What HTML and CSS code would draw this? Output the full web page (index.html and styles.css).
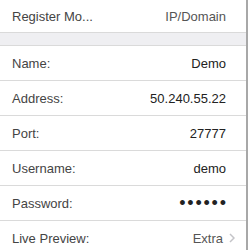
FILE: index.html
```html
<!DOCTYPE html>
<html lang="en">
<head>
    <meta charset="UTF-8">
    <meta name="viewport" content="width=device-width, initial-scale=1.0">
    <title>Device Settings</title>

    <link rel="stylesheet" href="styles.css">
</head>
<body>

    <div class="screen">
        <div class="row">
            <span class="label">Register Mo...</span>
            <span class="value muted">IP/Domain</span>
        </div>

        <div class="gap"></div>

        <div class="row">
            <span class="label">Name:</span>
            <span class="value">Demo</span>
        </div>
        <div class="row">
            <span class="label">Address:</span>
            <span class="value">50.240.55.22</span>
        </div>
        <div class="row">
            <span class="label">Port:</span>
            <span class="value">27777</span>
        </div>
        <div class="row">
            <span class="label">Username:</span>
            <span class="value">demo</span>
        </div>
        <div class="row">
            <span class="label">Password:</span>
            <span class="value dots">&bull;&bull;&bull;&bull;&bull;&bull;</span>
        </div>
        <div class="row link">
            <span class="label">Live Preview:</span>
            <span class="value muted">Extra</span>
            <svg class="chevron" width="6" height="10" viewBox="0 0 6 10">
                <path d="M1 1 L5 5 L1 9" fill="none" stroke="#c4c4c8" stroke-width="1.5"/>
            </svg>
        </div>
    </div>

</body>
</html>
```

FILE: styles.css
```css
* {
    padding: 0;
    margin: 0;
    box-sizing: border-box;
}

body {
    background-color: white;
    font-family: "Liberation Sans", Arial, sans-serif;
    font-size: 13px;
    width: 250px;
    height: 250px;
    overflow: hidden;
}

.screen {
    width: 248px;
    height: 250px;
    border-right: 2px solid #a8a8a8;
}

.row {
    display: flex;
    align-items: center;
    height: 35px;
    padding: 0 20px 0 12px;
    border-bottom: 1px solid #dadada;
    background-color: white;
}

.row:first-child {
    height: 33px;
}

.gap {
    height: 13px;
    background-color: #efeff2;
    border-bottom: 1px solid #dadada;
}

.label {
    flex: 1;
    color: #444;
}

.value {
    color: #222;
}

.muted {
    color: #555;
}

.dots {
    font-size: 18px;
    letter-spacing: 1.8px;
    margin-right: -1.8px;
}

.link {
    padding-right: 11px;
}

.chevron {
    margin-left: 6px;
}
```
